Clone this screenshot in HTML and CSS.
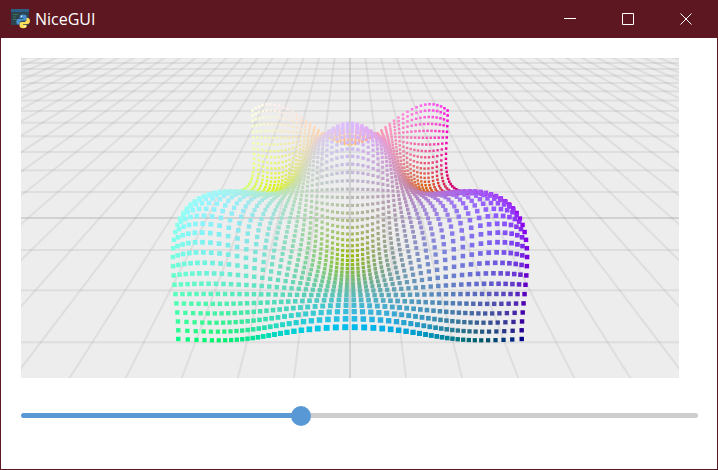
FILE: index.html
```html
<!DOCTYPE html>
<html lang="en">
<head>
<meta charset="utf-8">
<title>NiceGUI</title>
<link rel="stylesheet" href="styles.css">
</head>
<body>
<div class="window">
  <header class="titlebar">
    <svg class="app-icon" viewBox="0 0 20 20" aria-hidden="true">
      <rect x="1" y="0" width="18" height="16" fill="#2c4350"/>
      <rect x="1" y="0" width="18" height="3" fill="#2d5f86"/>
      <path d="M3 5.500h5M3 8h3M3 10.500h3" stroke="#3f7350" stroke-width="1"/>
      <path d="M13 5.500c-2.900 0-3.300 1.100-3.300 2.200v1.300h3.600v.8H8.700c-1.800 0-2.400 1.200-2.400 2.900s.8 2.900 2.200 2.900h1.200v-1.700c0-1.300 1-2.200 2.200-2.200h3.100c1 0 1.700-.8 1.700-1.700V7.700c0-1.400-1.300-2.200-3.700-2.200z" fill="#4a90cc"/>
      <path d="M13.300 19.200c2.900 0 3.400-1.100 3.400-2.200v-1.300h-3.600v-.8h4.700c1.500 0 2.100-1.300 2.100-2.900s-.8-2.900-2.100-2.900h-1.300v1.700c0 1.300-1 2.200-2.200 2.200h-3c-1 0-1.700.8-1.700 1.700V17c0 1.400 1.300 2.200 3.700 2.200z" fill="#ffdf5c"/>
      <circle cx="11.500" cy="7.300" r=".7" fill="#fff"/>
      <circle cx="15" cy="17.400" r=".7" fill="#fff"/>
    </svg>
    <h1 class="title">NiceGUI</h1>
    <button class="caption-button" type="button" aria-label="Minimize">
      <svg viewBox="0 0 12 12" aria-hidden="true"><path d="M0 5.500h12"/></svg>
    </button>
    <button class="caption-button" type="button" aria-label="Maximize">
      <svg viewBox="0 0 12 12" aria-hidden="true"><path d="M.5.5h11v11H.5z"/></svg>
    </button>
    <button class="caption-button" type="button" aria-label="Close">
      <svg viewBox="0 0 12 12" aria-hidden="true"><path d="M.5.5l11 11M11.500.5l-11 11"/></svg>
    </button>
  </header>
  <main class="content">
    <svg class="scene" id="scene" viewBox="-329 -160 658 320" preserveAspectRatio="xMidYMid slice" role="img" aria-label="Point cloud"></svg>
    <div class="slider" id="slider">
      <input id="frequency" type="range" min="0.1" max="3" step="0.1" value="1.3" aria-label="Frequency">
    </div>
  </main>
</div>
<script src="scene.js"></script>
</body>
</html>
```
FILE: styles.css
```css
* {
  box-sizing: border-box;
}

body {
  margin: 0;
  font-family: "Open Sans", "Noto Sans", sans-serif;
}

.window {
  display: flex;
  flex-direction: column;
  min-height: 100vh;
  border: 1px solid #5d1720;
  border-top: 0;
  background: #fff;
}

.titlebar {
  display: flex;
  align-items: center;
  height: 38px;
  padding: 0 2px 0 9px;
  background: #5d1720;
  color: #fff;
}

.app-icon {
  width: 20px;
  height: 20px;
  margin-right: 5px;
}

.title {
  flex: 1;
  margin: 0;
  font-size: 16px;
  font-weight: 400;
  line-height: 20px;
}

.caption-button {
  display: grid;
  place-items: center;
  width: 58px;
  height: 38px;
  padding: 0;
  border: 0;
  background: none;
}

.caption-button svg {
  width: 12px;
  height: 12px;
  fill: none;
  stroke: #fff;
  stroke-width: 1;
}

.content {
  display: flex;
  flex-direction: column;
  gap: 28px;
  padding: 20px 19px 20px 20px;
}

.scene {
  display: block;
  height: 320px;
  margin-right: 19px;
  background: #ededed;
}

.grid-line {
  stroke: #888;
  stroke-opacity: 0.14;
  stroke-width: 2;
}

.grid-axis {
  stroke: #444;
  stroke-opacity: 0.16;
  stroke-width: 2;
}

.slider {
  --value: 41%;
  position: relative;
  height: 20px;
}

.slider::before {
  content: "";
  position: absolute;
  inset: 7px 0 8px;
  border-radius: 3px;
  background: linear-gradient(to right, #5898d4 var(--value), #cdcdcd var(--value));
}

.slider input {
  position: absolute;
  inset: 0 -10px;
  width: calc(100% + 20px);
  height: 20px;
  margin: 0;
  appearance: none;
  background: none;
}

.slider input::-webkit-slider-thumb {
  appearance: none;
  width: 20px;
  height: 20px;
  border: 0;
  border-radius: 50%;
  background: #5898d4;
}
```
FILE: scene.js
```js
const SVG_NS = "http://www.w3.org/2000/svg";
const scene = document.getElementById("scene");
const slider = document.getElementById("slider");
const input = document.getElementById("frequency");

const FOCAL = 160 / Math.tan((37.5 * Math.PI) / 180);
const PITCH = (53.5 * Math.PI) / 180;
const DISTANCE = 5.83;
const COS = Math.cos(PITCH);
const SIN = Math.sin(PITCH);
const NEAR = 0.1;

// World space (x away from the viewer, y to the left, z up) to camera space.
function toCamera(x, y, z) {
  return {
    right: -y,
    up: x * SIN + z * COS,
    depth: DISTANCE + x * COS - z * SIN,
  };
}

function toScreen(p) {
  return [(p.right / p.depth) * FOCAL, (-p.up / p.depth) * FOCAL];
}

function add(parent, name, attributes) {
  const node = document.createElementNS(SVG_NS, name);
  for (const key in attributes) node.setAttribute(key, attributes[key]);
  parent.appendChild(node);
  return node;
}

function drawLine(a, b, className) {
  const [x1, y1] = toScreen(toCamera(...a));
  const [x2, y2] = toScreen(toCamera(...b));
  add(scene, "line", { x1, y1, x2, y2, class: className });
}

function drawGrid() {
  const nearest = (NEAR - DISTANCE) / COS + 5;
  for (let i = -50; i <= 50; i++) {
    const className = i === 0 ? "grid-axis" : "grid-line";
    if (i > nearest) drawLine([i, -50, 0], [i, 50, 0], className);
    drawLine([nearest, i, 0], [50, i, 0], className);
  }
}

function channel(linear) {
  const c = Math.min(1, Math.max(0, linear));
  const s = c <= 0.0031308 ? c * 12.92 : 1.055 * Math.pow(c, 1 / 2.4) - 0.055;
  return Math.round(s * 255);
}

function drawCloud(frequency) {
  const points = [];
  for (let i = 0; i < 50; i++) {
    for (let j = 0; j < 50; j++) {
      const x = -3 + (6 * j) / 49;
      const y = -3 + (6 * i) / 49;
      const z = Math.sin(x * frequency) * Math.cos(y * frequency) + 1;
      const p = toCamera(x, y, z);
      if (p.depth <= NEAR) continue;
      const fill = `rgb(${channel(x / 6 + 0.5)},${channel(y / 6 + 0.5)},${channel(z / 2)})`;
      points.push({ p, fill });
    }
  }
  points.sort((a, b) => b.p.depth - a.p.depth);
  for (const { p, fill } of points) {
    const [x, y] = toScreen(p);
    const size = 16 / p.depth;
    add(scene, "rect", { x: x - size / 2, y: y - size / 2, width: size, height: size, fill });
  }
}

function render() {
  const value = Number(input.value);
  slider.style.setProperty("--value", `${((value - 0.1) / 2.9) * 100}%`);
  scene.replaceChildren();
  drawGrid();
  drawCloud(value);
}

input.addEventListener("input", render);
render();
```
